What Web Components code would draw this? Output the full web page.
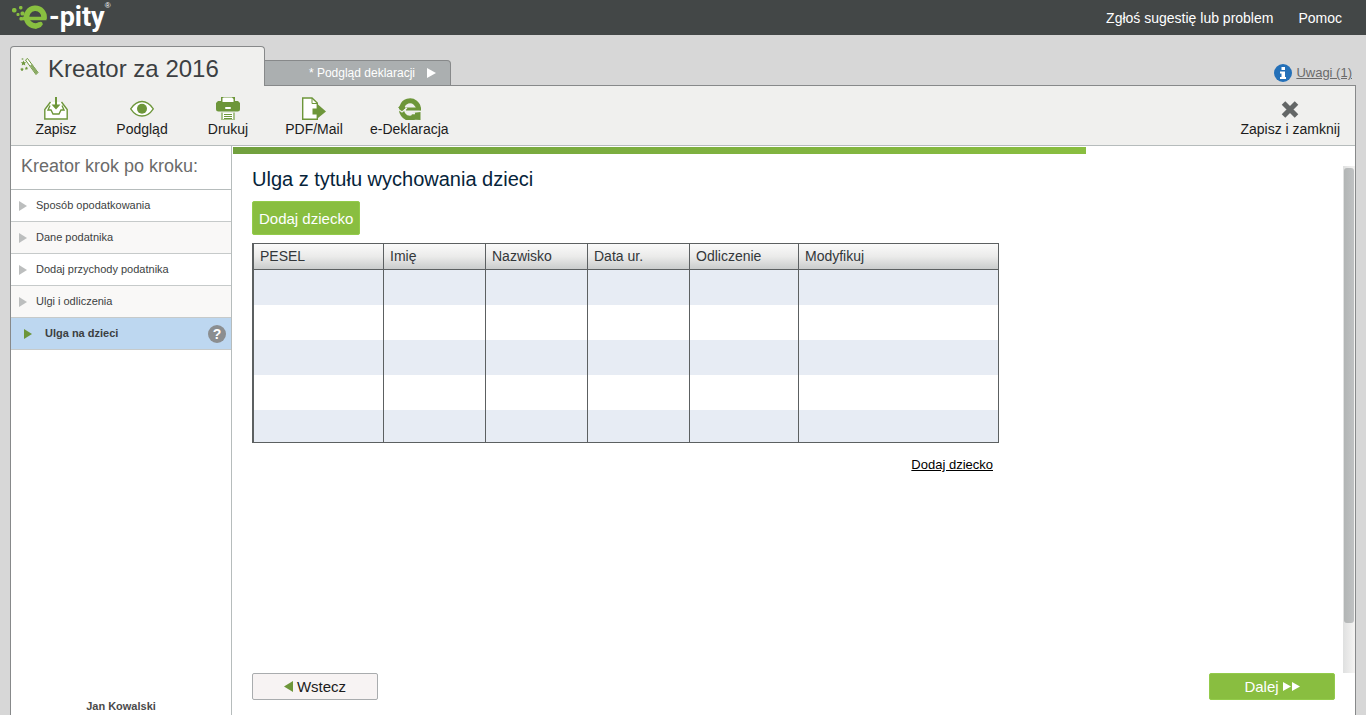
<!DOCTYPE html>
<html lang="pl">
<head>
<meta charset="utf-8">
<meta name="viewport" content="width=device-width, initial-scale=1">
<title>e-pity – Kreator za 2016</title>
<style>
html, body { margin: 0; height: 100%; }
body { font: 14px/16px "Liberation Sans", Arial, sans-serif; color: #1c1c1c; background: #d7d7d7; }
</style>
</head>
<body>
<ep-app></ep-app>
<script>
const define = (name, html) => customElements.define(name, class extends HTMLElement {
  constructor() {
    super();
    const t = document.createElement('template');
    t.innerHTML = html;
    this.attachShadow({ mode: 'open' }).append(t.content.cloneNode(true));
  }
});

const icons = {
  save: `<svg width="24" height="24" viewBox="0 0 24 24" fill="none" stroke="#6d963a"><path fill="#fff" stroke-width="1.4" d="M6.500 6 .800 13.500V23H23.200V13.500L17.500 6"/><path stroke-width="1.400" d="M6 9.500 4 14H7L9 18H15L17 14H20L18 9.500"/><path fill="#6d963a" stroke="none" d="M11 1H13V8.500H16.500L12 13.500 7.500 8.500H11Z"/></svg>`,
  eye: `<svg width="24" height="24" viewBox="0 0 24 24"><path d="M.700 12.800C4 8 8 5.500 12 5.500S20 8 23.300 12.800C20 17.800 16 20 12 20S4 17.800.700 12.800Z" fill="#fff" stroke="#6d963a" stroke-width="1.300"/><circle cx="12" cy="12.800" r="5" fill="#6d963a"/></svg>`,
  print: `<svg width="24" height="24" viewBox="0 0 24 24"><path d="M5 1H19V5H22L24 7V13Q24 15.500 21.500 15.500H2.500Q0 15.500 0 13V7L2 5H5Z" fill="#6d963a"/><path d="M7.500 1.500H16L17.500 3V6H6.500V2.500Z" fill="#fff"/><rect x="9" y="11" width="6" height="2" rx="1" fill="#fff"/><path d="M5 16.500H19V24H5Z" fill="#a8c28a"/><path d="M7 16.500H17V23H7Z" fill="#fff"/><path d="M8 18.500H16M8 20.500H16M8 22.500H16" stroke="#6d963a"/></svg>`,
  pdf: `<svg width="24" height="24" viewBox="0 0 24 24"><path d="M.700 2H10L15.300 7V23.300H.700Z" fill="#fff" stroke="#6d963a" stroke-width="1.400"/><path d="M10 2V7.500H15" fill="none" stroke="#6d963a"/><path d="M10.500 12.500H16V8.500L24 15.500 16 22V18.500H10.500Z" fill="#6d963a"/></svg>`,
  send: `<svg width="24" height="24" viewBox="0 0 24 24"><g fill="none" stroke="#6d963a"><path d="M21.500 14A8.500 8.700 0 1 0 20 18.500" stroke-width="5"/><path d="M9 13H24" stroke-width="3"/></g><path d="M1 11.500 5 8.500 9 12 6 14.500Z" fill="#6d963a"/><path d="M1.500 13.500 5 16 10 12" fill="none" stroke="#f0f0ee" stroke-width="1.300"/><path d="M15 17 23.500 16V24L14 23.500Z" fill="#6d963a"/><path d="M13 17.300H18" stroke="#f0f0ee" stroke-width="2"/></svg>`,
  close: `<svg width="24" height="24" viewBox="0 0 24 24"><path d="M5.500 7 18.500 20M18.500 7 5.500 20" stroke="#636666" stroke-width="5"/></svg>`
};

/* Logo: green mark followed by the wordmark */
define('ep-logo', `
<style>
:host { display: block; }
a { display: flex; color: #fff; text-decoration: none; }
b { font: 700 27px/35px Roboto, sans-serif; margin-left: 1px; }
sup { font: 8px/12px "Liberation Sans", sans-serif; }
</style>
<a href="#" aria-label="e-pity">
<svg width="36" height="35" viewBox="0 0 36 35" fill="#89c040">
<rect x="0" y="8" width="4.500" height="4.500" rx="1.800"/><rect x="7" y="6" width="3.500" height="3.500" rx="1.400"/><rect x="4.500" y="13" width="3" height="3" rx="1"/><rect x="8.500" y="11.500" width="4" height="4" rx="1.500"/><rect x="7.500" y="17" width="3.500" height="3.500" rx="1.300"/>
<g fill="none" stroke="#89c040"><path d="M32 18.500A8.800 8.800 0 1 0 28 24.500" stroke-width="5.500"/><path d="M10.500 18.500H34.500" stroke-width="3.500"/><path d="M24 26.300 28.500 24" stroke-width="4.500" stroke-linecap="round"/></g>
</svg><b>-pity</b><sup>®</sup></a>`);

define('ep-header', `
<style>
:host { display: block; background: #434747; }
header { display: flex; justify-content: space-between; height: 35px; padding: 0 24px 0 12px; }
nav { display: flex; gap: 25px; align-items: center; }
nav a { color: #fff; text-decoration: none; }
</style>
<header><ep-logo></ep-logo><nav><a href="#">Zgłoś sugestię lub problem</a><a href="#">Pomoc</a></nav></header>`);

define('ep-tabs', `
<style>
:host { display: flex; align-items: flex-end; position: relative; z-index: 1; margin-bottom: -1px; }
a { box-sizing: border-box; display: flex; align-items: center; text-decoration: none; }
.on { width: 255px; height: 40px; padding: 4px 9px 0; gap: 9px; border: 1px solid #87898a; border-bottom: 0; border-radius: 4px 4px 0 0; background: #f0f0ee; color: #3c3f42; font-size: 24px; line-height: 28px; }
.on svg { margin-bottom: 4px; }
.off { width: 186px; height: 26px; justify-content: flex-end; gap: 12px; padding-right: 14px; border: 1px solid #87898a; border-left: 0; border-radius: 0 4px 0 0; background: #abafb0; color: #fff; font-size: 12px; }
.notes { margin-left: auto; margin-right: 4px; padding-bottom: 4px; gap: 4px; color: #6b6b6b; font-size: 13px; }
.notes span { text-decoration: underline; }
</style>
<a class="on" href="#"><svg width="19" height="19" viewBox="0 0 19 19"><path d="M5.500 3 7.500 1.500 18 15.500 16 17.500Z" fill="#fff" stroke="#6d963a"/><path d="M10 8.500 12 7 18 15.500 16 17.500Z" fill="#8bab66"/><path d="M3.500 3.500 4.300 5.200 6.200 5.300 4.800 6.600 5.300 8.500 3.500 7.500 1.700 8.500 2.200 6.600.800 5.300 2.700 5.200ZM2 10.500 2.600 11.600 4 12 2.900 12.800 3 14 2 13.400 1 14 1.200 12.800 0 12 1.500 11.600ZM6.500 9.500 7 10.600 8.200 11 7.200 11.700 7.300 13 6.500 12.300 5.300 13 5.600 11.700 4.800 11 6 10.600Z" fill="#6d963a"/><circle cx="2.500" cy="2" r="1" fill="#9ab77a"/></svg>Kreator za 2016</a>
<a class="off" href="#">* Podgląd deklaracji<svg width="9" height="10"><path d="M0 0 9 5 0 10Z" fill="#fff"/></svg></a>
<a class="notes" href="#"><svg width="18" height="18" viewBox="0 0 18 18"><circle cx="9" cy="9" r="9" fill="#2470b8"/><path d="M7.500 3H11V6H7.500ZM6 7.500H11V13H12V15H6V13H7.500V9.500H6Z" fill="#fff"/></svg><span>Uwagi (1)</span></a>`);

customElements.define('ep-tool', class extends HTMLElement {
  connectedCallback() {
    this.attachShadow({ mode: 'open' }).innerHTML = `
<style>
:host { display: block; }
button { all: unset; box-sizing: border-box; display: flex; flex-direction: column; align-items: center; min-width: 86px; padding: 0 13px; cursor: pointer; gap: 1px; white-space: nowrap; }
svg { display: block; }
</style>
<button type="button">${icons[this.getAttribute('icon')]}<span><slot></slot></span></button>`;
  }
});

define('ep-toolbar', `
<style>
:host { display: flex; box-sizing: border-box; height: 60px; padding: 10px 2px 0; background: #f0f0ee; border-bottom: 1px solid #b6bcbc; }
.last { margin-left: auto; }
</style>
<ep-tool icon="save">Zapisz</ep-tool><ep-tool icon="eye">Podgląd</ep-tool><ep-tool icon="print">Drukuj</ep-tool><ep-tool icon="pdf">PDF/Mail</ep-tool><ep-tool icon="send">e-Deklaracja</ep-tool><ep-tool class="last" icon="close">Zapisz i zamknij</ep-tool>`);

define('ep-step', `
<style>
:host { display: block; border-bottom: 1px solid #c6caca; background: #fff; color: #3c3f42; }
:host(:nth-of-type(even)) { background: #f9f8f7; }
a { display: flex; align-items: center; height: 31px; gap: 9px; padding: 0 5px 0 8px; color: inherit; text-decoration: none; font-size: 11px; }
svg { fill: #bcbebe; }
.label { padding-bottom: 2px; }
.help { display: none; margin-left: auto; }
:host([active]) { background: #bdd7f0; font-weight: 700; }
:host([active]) a { padding-left: 13px; gap: 13px; }
:host([active]) svg { fill: #6d963a; }
:host([active]) .help { display: grid; }
.help { box-sizing: border-box; place-items: center; width: 18px; height: 18px; border-radius: 9px; background: #8b8e90; color: #fff; font-size: 14px; }
</style>
<a href="#"><svg width="8" height="10"><path d="M0 0 8 5 0 10Z"/></svg><span class="label"><slot></slot></span><span class="help">?</span></a>`);

define('ep-sidebar', `
<style>
:host { display: flex; flex-direction: column; flex: 0 0 220px; border-right: 1px solid #b6bcbc; background: #fff; }
h2 { margin: 0; padding: 9px 10px 12px; border-bottom: 1px solid #b6bcbc; font-size: 18px; line-height: 22px; font-weight: 400; color: #6b6b6b; }
p { margin: auto 0 1px; text-align: center; font-size: 11px; font-weight: 700; color: #4a4a4a; }
</style>
<h2>Kreator krok po kroku:</h2>
<nav><ep-step>Sposób opodatkowania</ep-step><ep-step>Dane podatnika</ep-step><ep-step>Dodaj przychody podatnika</ep-step><ep-step>Ulgi i odliczenia</ep-step><ep-step active>Ulga na dzieci</ep-step></nav>
<p>Jan Kowalski</p>`);

define('ep-button', `
<style>
:host { display: inline-flex; }
button { box-sizing: border-box; display: flex; flex: 1; align-items: center; justify-content: center; gap: 4px; margin: 0; padding: 4px 6px; border: 1px solid #93cb4b; border-radius: 2px; background: #89be40; color: #fff; font: inherit; font-size: 15px; line-height: 17px; white-space: nowrap; }
:host([plain]) button { background: #f7f3f3; border-color: #a9acae; color: #1c1c1c; }
</style>
<button type="button"><slot></slot></button>`);

define('ep-children-table', `
<style>
:host { display: block; width: 747px; }
table { width: 100%; table-layout: fixed; border-collapse: separate; border-spacing: 0; border: 1px solid #5c6061; border-left-width: 2px; }
th, td { box-sizing: border-box; padding: 0 6px 2px; border-right: 1px solid #5c6061; text-align: left; }
th:last-child, td:last-child { border-right: 0; }
th { height: 26px; border-bottom: 1px solid #5c6061; background: linear-gradient(#fafafa, #ebebea 50%, #cacccc); color: #33373a; font-weight: 400; }
td { height: 35px; }
tbody tr:nth-child(odd) { background: #e7ecf4; }
tbody tr:last-child td { height: 32px; }
.pesel { width: 130px; } .name { width: 102px; } .sum { width: 109px; }
</style>
<table><colgroup><col class="pesel"><col class="name"><col class="name"><col class="name"><col class="sum"><col></colgroup>
<thead><tr><th scope="col">PESEL</th><th scope="col">Imię</th><th scope="col">Nazwisko</th><th scope="col">Data ur.</th><th scope="col">Odliczenie</th><th scope="col">Modyfikuj</th></tr></thead>
<tbody>${'<tr><td></td><td></td><td></td><td></td><td></td><td></td></tr>'.repeat(5)}</tbody></table>`);

define('ep-scrollbar', `
<style>
:host { display: flex; flex-direction: column; box-sizing: border-box; width: 12px; padding: 2px 1px 0; background: linear-gradient(90deg, #dfe0e0, #f5f4f3); }
i { flex: 0 0 90%; border-radius: 3px; background: linear-gradient(90deg, #b2b5b5, #bfc1c2); }
</style><i></i>`);

define('ep-main', `
<style>
:host { display: flex; flex: 1; flex-direction: column; min-width: 0; padding: 1px 0 15px 1px; background: #fff; }
.bar { width: 76%; height: 7px; margin-bottom: 12px; background: linear-gradient(90deg, #71a03e, #89be40); }
.view { display: flex; flex: 1; justify-content: space-between; padding-left: 19px; }
h1 { margin: 0 0 9px; font-size: 20px; line-height: 26px; font-weight: 400; color: #06243a; }
.add { height: 34px; margin-bottom: 8px; }
.more { display: flex; justify-content: flex-end; padding: 14px 6px 0 0; font-size: 13px; }
.more a { color: #000; }
footer { display: flex; justify-content: space-between; padding: 0 20px 0 19px; }
footer ep-button { width: 126px; height: 27px; }
</style>
<div class="bar" role="progressbar" aria-label="Postęp" aria-valuenow="76"></div>
<div class="view"><section><h1>Ulga z tytułu wychowania dzieci</h1><ep-button class="add">Dodaj dziecko</ep-button>
<ep-children-table></ep-children-table><div class="more"><a href="#">Dodaj dziecko</a></div></section><ep-scrollbar></ep-scrollbar></div>
<footer><ep-button plain><svg width="9" height="11"><path d="M9 0V11L0 5.500Z" fill="#6d963a"/></svg>Wstecz</ep-button><ep-button>Dalej <svg width="17" height="9"><path d="M0 0 8 4.500 0 9ZM9 0 17 4.500 9 9Z" fill="#fff"/></svg></ep-button></footer>`);

define('ep-app', `
<style>
:host { display: flex; flex-direction: column; min-height: 100vh; }
.page { display: flex; flex: 1; flex-direction: column; padding: 11px 10px 0; }
.panel { display: flex; flex: 1; flex-direction: column; border: 1px solid #87898a; border-bottom: 0; }
.body { display: flex; flex: 1; }
</style>
<ep-header></ep-header>
<div class="page"><ep-tabs></ep-tabs><div class="panel"><ep-toolbar></ep-toolbar><div class="body"><ep-sidebar></ep-sidebar><ep-main></ep-main></div></div></div>`);
</script>
</body>
</html>
